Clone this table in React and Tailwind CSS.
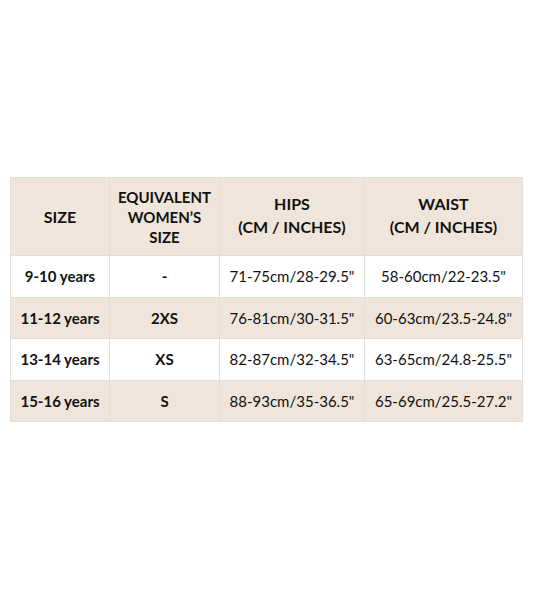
import React from 'react';

const rows = [
  { size: '9-10 years', eq: '-', hips: '71-75cm/28-29.5"', waist: '58-60cm/22-23.5"', shaded: false },
  { size: '11-12 years', eq: '2XS', hips: '76-81cm/30-31.5"', waist: '60-63cm/23.5-24.8"', shaded: true },
  { size: '13-14 years', eq: 'XS', hips: '82-87cm/32-34.5"', waist: '63-65cm/24.8-25.5"', shaded: false },
  { size: '15-16 years', eq: 'S', hips: '88-93cm/35-36.5"', waist: '65-69cm/25.5-27.2"', shaded: true },
];

const cell = 'border border-[#e2ddd8] text-center align-middle p-0';

const App = () => {
  return (
    <div className="w-[533px] h-[600px] bg-white pt-[177px] pl-[10px] text-[#111] font-['Lato',sans-serif]">
      <table className="border-collapse w-[512px] table-fixed">
        <colgroup>
          <col className="w-[99px]" />
          <col className="w-[110px]" />
          <col className="w-[145px]" />
          <col className="w-[158px]" />
        </colgroup>
        <thead>
          <tr className="bg-[#efe5db] h-[78px]">
            <th className={`${cell} text-[16px] font-bold`}>SIZE</th>
            <th className={`${cell} text-[15px] leading-[20px] font-bold`}>
              EQUIVALENT<br />WOMEN’S<br />SIZE
            </th>
            <th className={`${cell} text-[16px] leading-[23px] font-bold pb-[3px]`}>
              HIPS<br />(CM / INCHES)
            </th>
            <th className={`${cell} text-[16px] leading-[23px] font-bold pb-[3px]`}>
              WAIST<br />(CM / INCHES)
            </th>
          </tr>
        </thead>
        <tbody>
          {rows.map((r) => (
            <tr key={r.size} className={`h-[41.5px] ${r.shaded ? 'bg-[#efe5db]' : 'bg-white'}`}>
              <td className={`${cell} text-[15px] font-bold`}>{r.size}</td>
              <td className={`${cell} text-[15px] font-bold`}>{r.eq}</td>
              <td className={`${cell} text-[15px]`}>{r.hips}</td>
              <td className={`${cell} text-[15px]`}>{r.waist}</td>
            </tr>
          ))}
        </tbody>
      </table>
    </div>
  );
};

export default App;
